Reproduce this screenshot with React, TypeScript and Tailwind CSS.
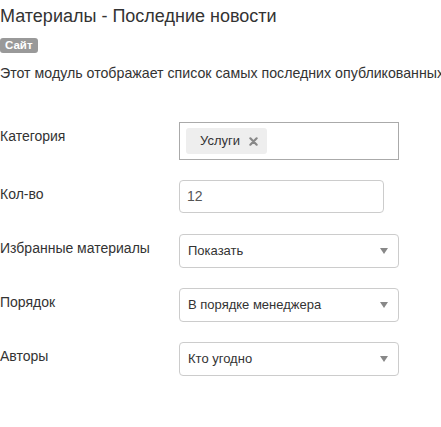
import React from 'react';

const font = { fontFamily: '"Liberation Sans", Arial, sans-serif' };

interface FieldRowProps {
    label: string;
    children: React.ReactNode;
    className?: string;
}

const FieldRow: React.FC<FieldRowProps> = ({ label, children, className }) => (
    <div className={`flex items-start ${className ?? ''}`}>
        <label className="w-[179px] shrink-0 pt-[5px] text-[14px] text-[#333] leading-[18px]">{label}</label>
        {children}
    </div>
);

const SelectBox: React.FC<{ value: string }> = ({ value }) => (
    <div className="w-[220px] h-[34px] border border-[#ccc] rounded-[4px] bg-white flex items-center justify-between pl-[8px] pr-[10px]">
        <span className="text-[13px] text-[#333]">{value}</span>
        {/* dropdown caret */}
        <span className="w-0 h-0 border-l-[4px] border-r-[4px] border-t-[6px] border-l-transparent border-r-transparent border-t-[#888]" />
    </div>
);

export default function App() {
    return (
        <div className="w-[441px] h-[427px] bg-white overflow-hidden" style={font}>
            <h2 className="text-[18px] leading-[22px] text-[#333] pt-[5px]">Материалы - Последние новости</h2>

            <span className="inline-block mt-[11px] bg-[#999] text-white text-[11.5px] font-bold leading-[15px] px-[5px] rounded-[3px]">
                Сайт
            </span>

            <p className="mt-[8px] text-[14.2px] leading-[18px] text-[#333] whitespace-nowrap">
                Этот модуль отображает список самых последних опубликованных материалов.
            </p>

            <div className="mt-[40px] flex flex-col">
                <FieldRow label="Категория">
                    <div className="w-[220px] h-[38px] border border-[#aaa] bg-white flex items-center pl-[6px]">
                        <span className="flex items-center h-[26px] bg-[#eee] rounded-[3px] pl-[14px] pr-[9px] text-[13px] text-[#333]">
                            Услуги
                            <svg viewBox="0 0 10 10" className="ml-[9px] w-[9px] h-[9px]">
                                <path d="M1.5 1.5 L8.5 8.5 M8.5 1.5 L1.5 8.5" stroke="#888" strokeWidth="2.4" strokeLinecap="round" />
                            </svg>
                        </span>
                    </div>
                </FieldRow>

                <FieldRow label="Кол-во" className="mt-[20px]">
                    <div className="w-[205px] h-[33px] border border-[#ccc] rounded-[4px] bg-white flex items-center pl-[7px]">
                        <span className="text-[14px] text-[#555]">12</span>
                    </div>
                </FieldRow>

                <FieldRow label="Избранные материалы" className="mt-[21px]">
                    <SelectBox value="Показать" />
                </FieldRow>

                <FieldRow label="Порядок" className="mt-[20px]">
                    <SelectBox value="В порядке менеджера" />
                </FieldRow>

                <FieldRow label="Авторы" className="mt-[20px]">
                    <SelectBox value="Кто угодно" />
                </FieldRow>
            </div>
        </div>
    );
}
